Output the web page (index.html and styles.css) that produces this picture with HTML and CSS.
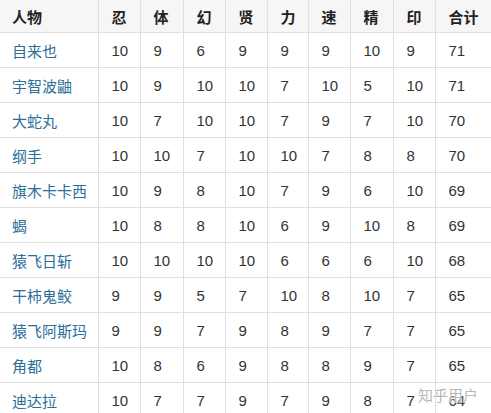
FILE: index.html
```html
<!DOCTYPE html>
<html lang="zh">
<head>
<meta charset="utf-8">
<link rel="stylesheet" href="styles.css">
</head>
<body>
<div class="wrap">
<table class="tbl">
<colgroup>
<col class="c-name"><col class="c-n"><col class="c-n2"><col class="c-n"><col class="c-n"><col class="c-n3"><col class="c-n"><col class="c-n2"><col class="c-n"><col class="c-sum">
</colgroup>
<thead>
<tr><th>人物</th><th>忍</th><th>体</th><th>幻</th><th>贤</th><th>力</th><th>速</th><th>精</th><th>印</th><th>合计</th></tr>
</thead>
<tbody>
<tr><td class="nm">自来也</td><td>10</td><td>9</td><td>6</td><td>9</td><td>9</td><td>9</td><td>10</td><td>9</td><td>71</td></tr>
<tr><td class="nm">宇智波鼬</td><td>10</td><td>9</td><td>10</td><td>10</td><td>7</td><td>10</td><td>5</td><td>10</td><td>71</td></tr>
<tr><td class="nm">大蛇丸</td><td>10</td><td>7</td><td>10</td><td>10</td><td>7</td><td>9</td><td>7</td><td>10</td><td>70</td></tr>
<tr><td class="nm">纲手</td><td>10</td><td>10</td><td>7</td><td>10</td><td>10</td><td>7</td><td>8</td><td>8</td><td>70</td></tr>
<tr><td class="nm">旗木卡卡西</td><td>10</td><td>9</td><td>8</td><td>10</td><td>7</td><td>9</td><td>6</td><td>10</td><td>69</td></tr>
<tr><td class="nm">蝎</td><td>10</td><td>8</td><td>8</td><td>10</td><td>6</td><td>9</td><td>10</td><td>8</td><td>69</td></tr>
<tr><td class="nm">猿飞日斩</td><td>10</td><td>10</td><td>10</td><td>10</td><td>6</td><td>6</td><td>6</td><td>10</td><td>68</td></tr>
<tr><td class="nm">干柿鬼鲛</td><td>9</td><td>9</td><td>5</td><td>7</td><td>10</td><td>8</td><td>10</td><td>7</td><td>65</td></tr>
<tr><td class="nm">猿飞阿斯玛</td><td>9</td><td>9</td><td>7</td><td>9</td><td>8</td><td>9</td><td>7</td><td>7</td><td>65</td></tr>
<tr><td class="nm">角都</td><td>10</td><td>8</td><td>6</td><td>9</td><td>8</td><td>8</td><td>9</td><td>7</td><td>65</td></tr>
<tr><td class="nm">迪达拉</td><td>10</td><td>7</td><td>7</td><td>9</td><td>7</td><td>9</td><td>8</td><td>7</td><td>64</td></tr>
</tbody>
</table>
<div class="watermark">知乎用户</div>
</div>
</body>
</html>
```
FILE: styles.css
```css
html, body {
  margin: 0;
  padding: 0;
  background: #fff;
  overflow: hidden;
}
.wrap {
  position: relative;
  width: 491px;
  height: 413px;
  overflow: hidden;
}
.tbl {
  border-collapse: collapse;
  table-layout: fixed;
  width: 520px;
  font-family: "Liberation Sans", Arial, "Noto Sans CJK SC", sans-serif;
  font-size: 15px;
  color: #333;
}
.c-name { width: 98px; }
.c-n { width: 42px; }
.c-n2 { width: 43px; }
.c-n3 { width: 41px; }
.c-sum { width: 85px; }
.tbl th, .tbl td {
  border: 1px solid #e0e0e0;
  padding: 0 0 0 13px;
  text-align: left;
  vertical-align: middle;
  white-space: nowrap;
}
.tbl th {
  height: 32px;
  background: #f6f6f6;
  border-top: none;
  font-family: "Noto Sans CJK SC", sans-serif;
  font-weight: 700;
  color: #222;
  font-size: 15px;
}
.tbl td {
  height: 34px;
}
.tbl th:first-child, .tbl td:first-child {
  border-left: none;
  padding-left: 12px;
}
.tbl td.nm {
  font-family: "Noto Sans CJK SC", sans-serif;
  color: #2b6f99;
  font-size: 15px;
}
.watermark {
  position: absolute;
  left: 418px;
  top: 384px;
  font-family: "Noto Sans CJK SC", sans-serif;
  font-size: 15px;
  color: rgba(170, 170, 170, 0.85);
  text-shadow: 0 0 2px #fff, 0 0 1px #fff;
  letter-spacing: 0px;
}
```
